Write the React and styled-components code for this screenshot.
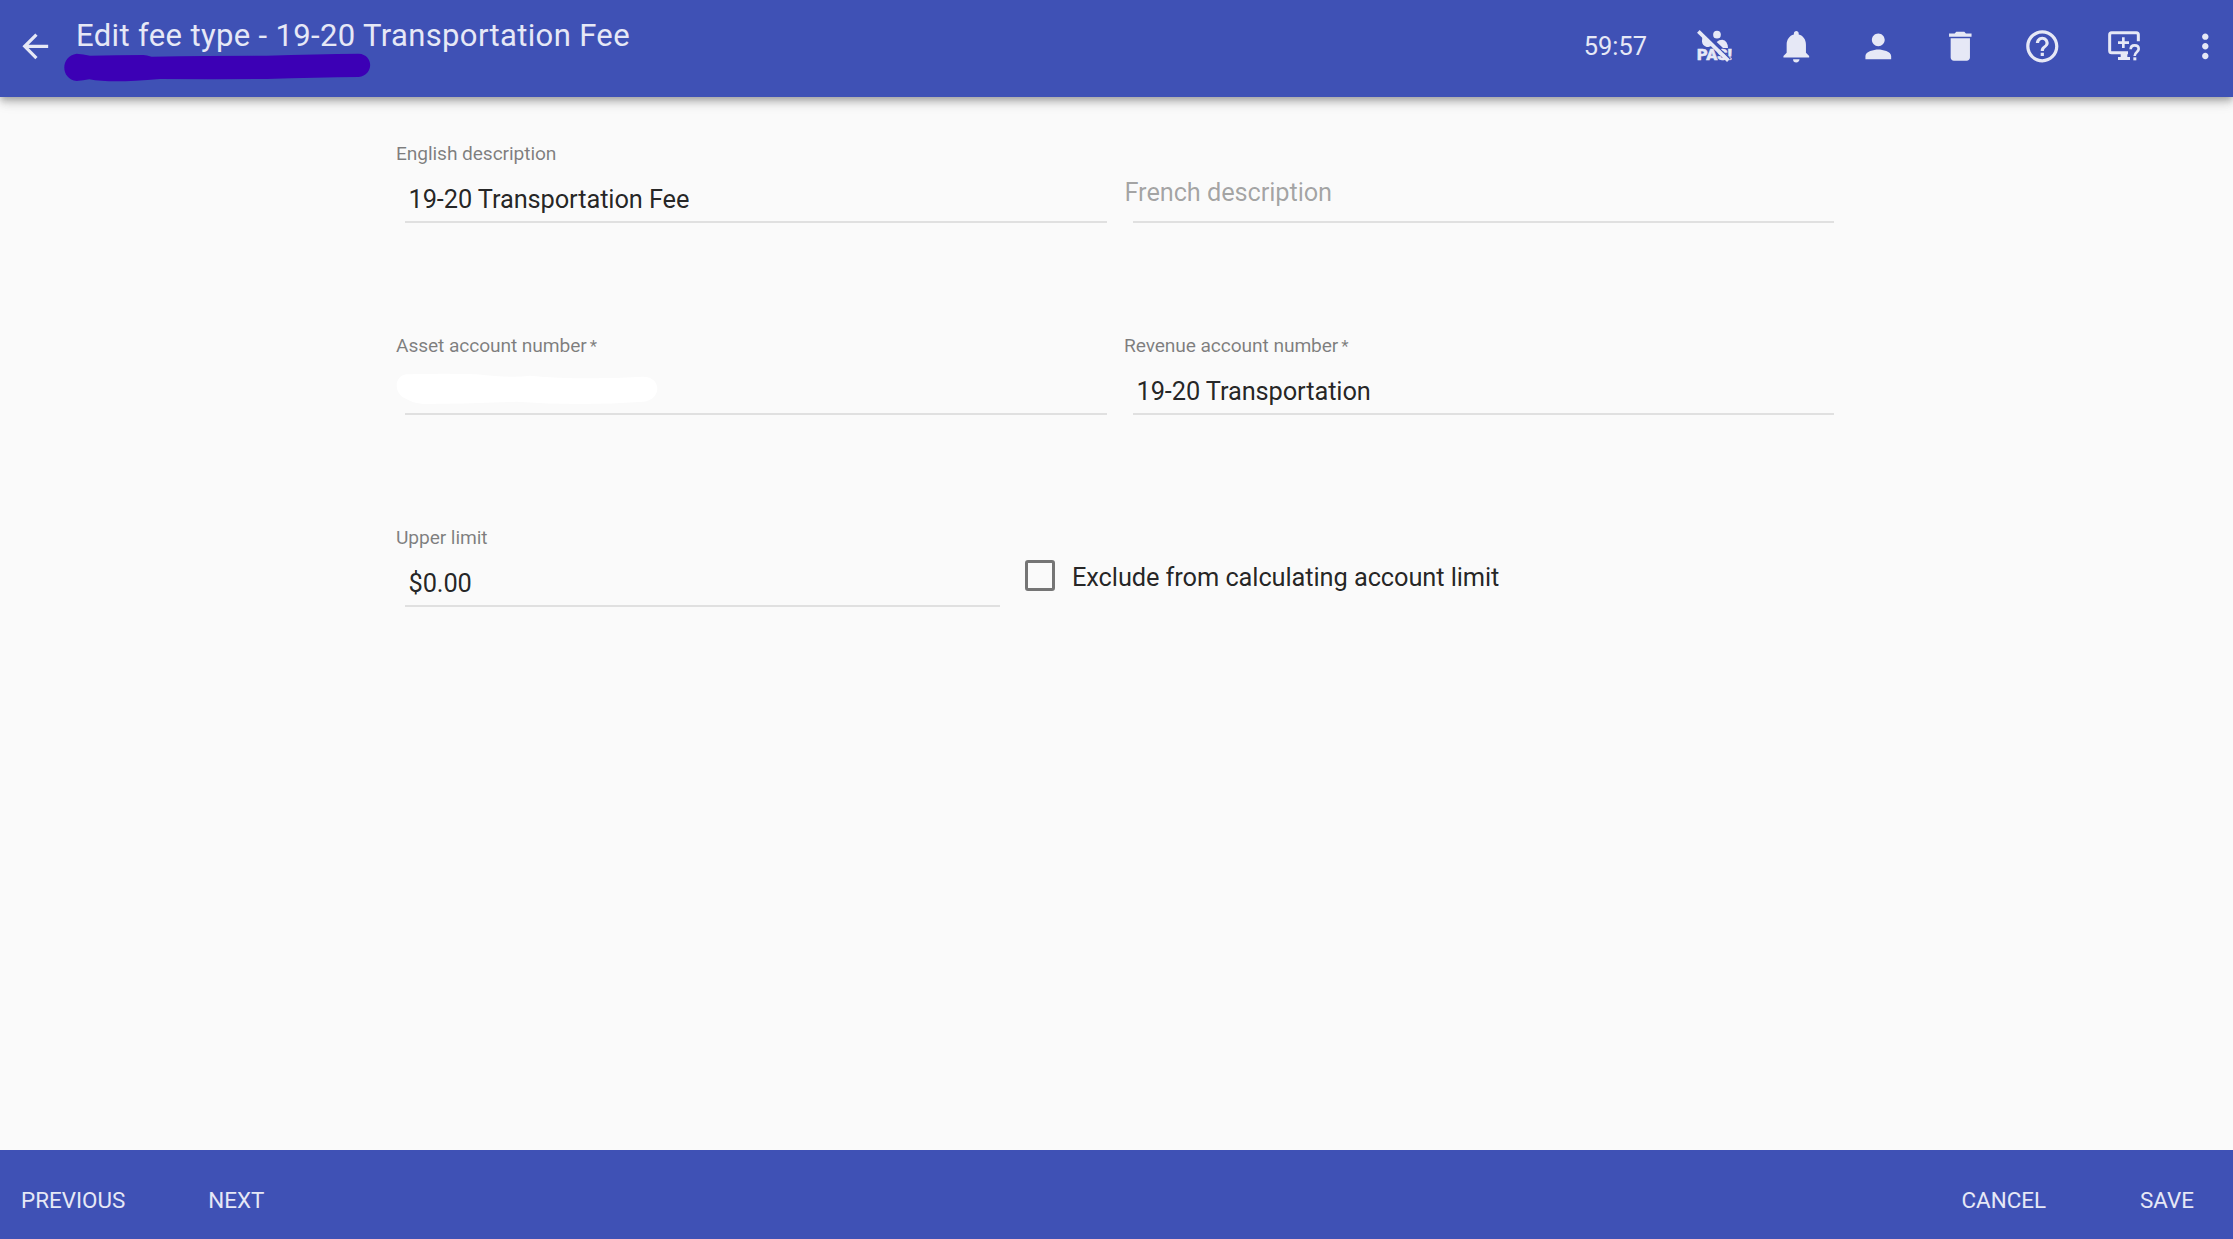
import React from 'react';
import styled, { createGlobalStyle } from 'styled-components';
import { MdArrowBack, MdNotifications, MdPerson, MdDelete, MdHelpOutline, MdMoreVert } from 'react-icons/md';

const GlobalStyle = createGlobalStyle`
  *, *::before, *::after { box-sizing: border-box; }
  body { margin: 0; background: #fafafa; font-family: Roboto, "Liberation Sans", sans-serif; }
`;

const Page = styled.div`
  display: flex;
  flex-direction: column;
  height: 100vh;
  min-height: 600px;
  overflow: hidden;
  color: rgba(0, 0, 0, 0.87);
`;

const Header = styled.header`
  display: flex;
  flex: none;
  justify-content: space-between;
  height: 97px;
  padding-right: 28px;
  background: #3f51b5;
  color: #e6e8f6;
  z-index: 1;
  box-shadow: 0 3px 6px -1px rgba(0, 0, 0, 0.2), 0 6px 8px 0 rgba(0, 0, 0, 0.14), 0 2px 16px 0 rgba(0, 0, 0, 0.12);
`;

const HeaderStart = styled.div`
  display: flex;
`;

const HeaderEnd = styled.div`
  display: flex;
  align-items: center;
  height: 92px;
`;

const IconButton = styled.button`
  display: flex;
  align-items: center;
  justify-content: ${(p) => p.$align || 'center'};
  width: ${(p) => p.$width || 82}px;
  height: 92px;
  padding: 0;
  border: 0;
  background: none;
  color: inherit;
  font-size: 38.6px;
`;

const MoreIcon = styled(MdMoreVert)`
  margin-right: -20px;
`;

const Titles = styled.div`
  display: flex;
  flex-direction: column;
  padding-top: 16px;
`;

const Title = styled.h1`
  margin: 0;
  padding-left: 6px;
  font-size: 31px;
  line-height: 39px;
  font-weight: 400;
  letter-spacing: 0.36px;
  white-space: nowrap;
`;

const Subtitle = styled.svg`
  display: block;
  width: 308px;
  height: 29px;
  margin: -2px 0 0 -6px;
`;

const Timer = styled.span`
  margin-right: 26px;
  font-size: 25.4px;
  line-height: 40px;
`;

const Main = styled.main`
  display: flex;
  flex: 1;
  flex-direction: column;
  padding: 44px 399px 0 396px;
`;

const Row = styled.div`
  display: flex;
  height: 192px;
`;

const FieldBox = styled.label`
  display: flex;
  flex-direction: column;
  width: ${(p) => p.$width}px;
  margin-right: ${(p) => p.$gap || 0}px;
`;

const FieldLabel = styled.span`
  height: 39px;
  font-size: 19.2px;
  line-height: 25px;
  letter-spacing: -0.1px;
  color: rgba(0, 0, 0, 0.5);
`;

const Required = styled.span`
  margin-left: 3px;
  font-size: 17px;
`;

const FieldValue = styled.span`
  height: 43px;
  margin-left: 9px;
  padding-left: 3.5px;
  border-bottom: 2px solid #e0e0e0;
  font-size: 25.4px;
  line-height: 39px;
  letter-spacing: -0.1px;
`;

const Placeholder = styled(FieldValue)`
  padding: 0;
  color: rgba(0, 0, 0, 0.36);
  line-height: 25px;
`;

const PlaceholderText = styled.span`
  margin-left: -8.5px;
`;

const HiddenValue = styled.svg`
  display: block;
  width: 264px;
  height: 32px;
  margin: 1px 0 0 -14px;
`;

const Check = styled.label`
  display: flex;
  align-items: center;
  gap: 17px;
  height: 31px;
  margin-top: 35px;
`;

const Box = styled.span`
  width: 30px;
  height: 31px;
  border: 3px solid #757575;
  border-radius: 3px;
`;

const CheckText = styled.span`
  padding-top: 3px;
  font-size: 25.4px;
  line-height: 32px;
  letter-spacing: -0.09px;
`;

const Footer = styled.footer`
  display: flex;
  flex: none;
  justify-content: space-between;
  height: 89px;
  padding: 34px 39px 0 21px;
  background: #3f51b5;
`;

const Actions = styled.div`
  display: flex;
  align-items: flex-start;
  gap: ${(p) => p.$gap}px;
`;

const Action = styled.button`
  padding: 0;
  border: 0;
  background: none;
  color: #e6e8f6;
  font-family: inherit;
  font-size: 22.4px;
  line-height: 33px;
  text-transform: uppercase;
`;

const PasText = styled.text`
  font-family: Roboto, sans-serif;
  font-size: 46px;
  font-weight: 900;
  stroke: currentColor;
  stroke-width: 1.5px;
`;

function PasIcon() {
  return (
    <svg width="36" height="34" viewBox="408 87 108 102" fill="currentColor">
      <circle cx="471" cy="104" r="11.5" />
      <path d="M428 108 L455 135 Q452 141 440 141 Q426 137 426 124 Q426 114 428 108Z" />
      <path d="M470 126 Q477 119 487 119 Q503 121 504 144 H489 Z" />
      <PasText x="411" y="180" textLength="105" lengthAdjust="spacingAndGlyphs">PAS!</PasText>
      <path d="M422 91 L511 178" stroke="#3f51b5" strokeWidth="4" />
      <path d="M415 94 L505 182" stroke="currentColor" strokeWidth="11" />
    </svg>
  );
}

function ScreenHelpIcon() {
  return (
    <svg width="34" height="32" viewBox="642 92 102 96" fill="none" stroke="currentColor">
      <path d="M736 126 V106 Q736 100 730 100 H656 Q650 100 650 106 V154 Q650 160 656 160 H705" strokeWidth="9" />
      <path d="M691 114 V146 M675 130 H708" strokeWidth="8" />
      <path d="M683 161 H703 V173 H711 V182 H675 V173 H683Z" fill="currentColor" stroke="none" />
      <path d="M713 150 Q713 138 725 138 Q737 138 737 149 C737 158 725 158 725 170" strokeWidth="8" />
      <path d="M721 174 H730 V183 H721Z" fill="currentColor" stroke="none" />
    </svg>
  );
}

function Field({ label, required, width, gap, children }) {
  return (
    <FieldBox $width={width} $gap={gap}>
      <FieldLabel>
        {label}
        {required && <Required>*</Required>}
      </FieldLabel>
      <FieldValue>{children}</FieldValue>
    </FieldBox>
  );
}

export default function App() {
  return (
    <Page>
      <GlobalStyle />
      <Header>
        <HeaderStart>
          <IconButton $width={70} aria-label="Back"><MdArrowBack /></IconButton>
          <Titles>
            <Title>Edit fee type - 19-20 Transportation Fee</Title>
            <Subtitle viewBox="192 159 924 87" fill="#3c00b5">
              <path d="M230 161 Q250 162 270 167 Q350 165 430 165 Q440 165 455 170 Q640 167 800 167 Q950 162 1076 161 C1122 163 1122 227 1076 231 Q950 232 800 237 Q640 238 480 237 Q400 244 350 244 Q300 244 268 238 Q250 242 230 243 C181 239 180 168 230 161Z" />
            </Subtitle>
          </Titles>
        </HeaderStart>
        <HeaderEnd>
          <Timer>59:57</Timer>
          <IconButton aria-label="PAS"><PasIcon /></IconButton>
          <IconButton aria-label="Notifications"><MdNotifications /></IconButton>
          <IconButton aria-label="Account"><MdPerson /></IconButton>
          <IconButton aria-label="Delete"><MdDelete /></IconButton>
          <IconButton aria-label="Help"><MdHelpOutline /></IconButton>
          <IconButton aria-label="Screen help"><ScreenHelpIcon /></IconButton>
          <IconButton $width={40} $align="flex-end" aria-label="More"><MoreIcon /></IconButton>
        </HeaderEnd>
      </Header>
      <Main>
        <Row>
          <Field label="English description" width={711} gap={17}>19-20 Transportation Fee</Field>
          <FieldBox $width={710}>
            <FieldLabel />
            <Placeholder><PlaceholderText>French description</PlaceholderText></Placeholder>
          </FieldBox>
        </Row>
        <Row>
          <Field label="Asset account number" required width={711} gap={17}>
            <HiddenValue viewBox="45 160 792 96" fill="#fff">
              <path d="M80 164 Q200 160 290 164 Q400 176 450 168 Q600 182 790 171 C846 171 846 240 790 246 Q600 260 410 246 Q250 252 130 253 Q98 251 75 236 C40 220 42 168 80 164Z" />
            </HiddenValue>
          </Field>
          <Field label="Revenue account number" required width={710}>19-20 Transportation</Field>
        </Row>
        <Row>
          <Field label="Upper limit" width={604} gap={25}>$0.00</Field>
          <Check>
            <Box />
            <CheckText>Exclude from calculating account limit</CheckText>
          </Check>
        </Row>
      </Main>
      <Footer>
        <Actions $gap={83}>
          <Action>Previous</Action>
          <Action>Next</Action>
        </Actions>
        <Actions $gap={94}>
          <Action>Cancel</Action>
          <Action>Save</Action>
        </Actions>
      </Footer>
    </Page>
  );
}
